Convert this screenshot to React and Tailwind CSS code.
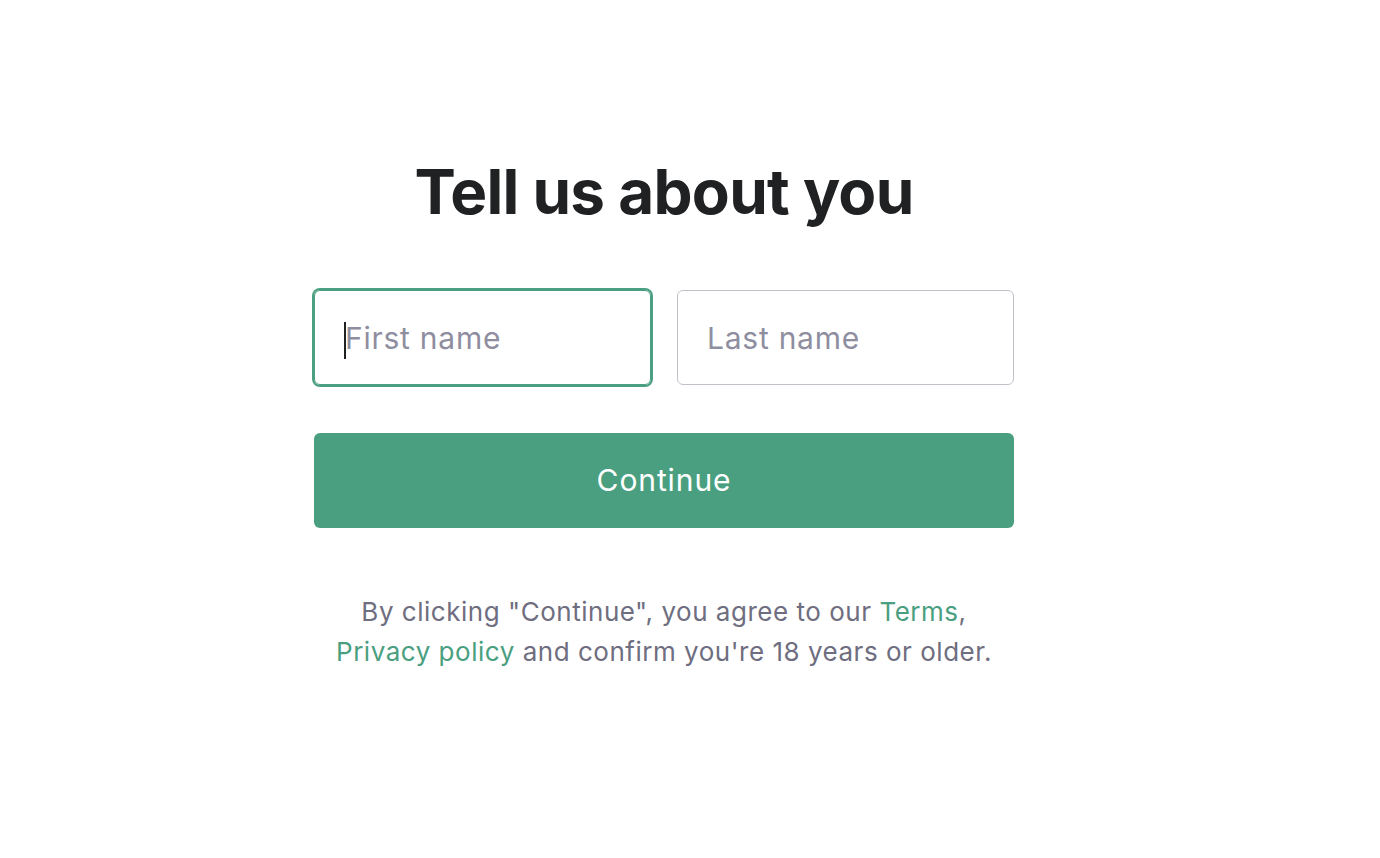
import React from 'react';

const App = () => {
  return (
    <div className="w-full h-[858px] bg-white font-['Inter',sans-serif]">
      <div className="w-[700px] ml-[314px] pt-[152px] flex flex-col items-center">
        {/* heading */}
        <h1 className="text-[62px] leading-[80px] font-bold tracking-[-0.012em] text-[#202123]">
          Tell us about you
        </h1>

        {/* name fields */}
        <div className="w-full grid grid-cols-2 gap-[26px] mt-[58px]">
          <div className="relative">
            <input
              className="w-full h-[95px] rounded-[6px] border border-[#4a9f80] ring-2 ring-[#4a9f80] outline-none px-[30px] text-[30px] tracking-[0.025em] text-[#202123] placeholder:text-[#8e8ea0] caret-transparent"
              placeholder="First name"
            />
            <span className="absolute left-[30px] top-[32px] w-[2px] h-[37px] bg-[#202123]" />
          </div>
          <input
            className="w-full h-[95px] rounded-[6px] border border-[#c2c1ca] outline-none px-[29px] text-[30px] tracking-[0.025em] text-[#202123] placeholder:text-[#8e8ea0]"
            placeholder="Last name"
          />
        </div>

        {/* continue */}
        <button className="w-full h-[95px] mt-[48px] rounded-[6px] bg-[#4a9f80] text-white text-[30px] tracking-[0.03em] font-normal">
          Continue
        </button>

        {/* legal */}
        <p className="mt-[64px] text-center text-[26px] leading-[40px] tracking-[0.02em] text-[#6e6e80]">
          By clicking "Continue", you agree to our <a className="text-[#4a9f80]">Terms</a>,
          <br />
          <a className="text-[#4a9f80]">Privacy policy</a> and confirm you're 18 years or older.
        </p>
      </div>
    </div>
  );
};

export default App;
